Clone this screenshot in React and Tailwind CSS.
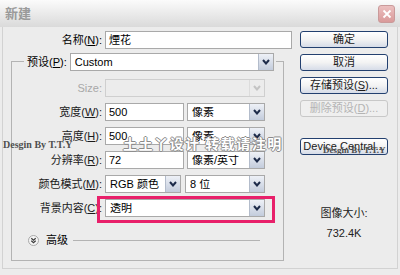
import React from 'react'

// 下拉框右侧的箭头按钮
const Arrow = ({ disabled }) => (
  <div
    className={`w-[15px] h-full flex items-center justify-center border-l ${
      disabled
        ? 'border-[#dcdcdc] bg-[#ececec]'
        : 'border-[#b3bccb] bg-linear-to-b from-[#eef1f7] to-[#c3ccdc]'
    }`}
  >
    <svg width="8" height="6" viewBox="0 0 8 6">
      <polyline
        points="1,1 4,4.5 7,1"
        fill="none"
        stroke={disabled ? '#c4c4c4' : '#1d2b4a'}
        strokeWidth="2"
      />
    </svg>
  </div>
)

const Select = ({ w, value, disabled }) => (
  <div
    className={`flex items-center h-[18px] border ${w} ${
      disabled ? 'border-[#cfcfcf] bg-[#ececec]' : 'border-[#a9a9a9] bg-white'
    }`}
  >
    <span className="flex-1 pl-[4px] whitespace-nowrap overflow-hidden">{value}</span>
    <Arrow disabled={disabled} />
  </div>
)

const Input = ({ w, value }) => (
  <div className={`flex items-center h-[18px] border border-[#a9a9a9] bg-white pl-[3px] ${w}`}>
    {value}
  </div>
)

const Label = ({ children, dim }) => (
  <div className={`w-[93px] pr-[3px] text-right whitespace-nowrap ${dim ? 'text-[#a8a8a8]' : 'text-[#1a1a1a]'}`}>
    {children}
  </div>
)

const Button = ({ children, disabled, className = '' }) => (
  <div
    className={`h-[17px] flex items-center justify-center rounded-[3px] border whitespace-nowrap ${
      disabled
        ? 'border-[#c8c8c8] text-[#b4b4b4] bg-[#efefef]'
        : 'border-[#23406f] text-[#1a1a1a] bg-linear-to-b from-white via-[#f3f3f3] to-[#d6dce8]'
    } ${className}`}
  >
    {children}
  </div>
)

const U = ({ children }) => <span className="underline">{children}</span>

const App = () => {
  return (
    <div className="relative w-[400px] h-[275px] overflow-hidden bg-[#ececec] text-[11px] leading-none font-['Liberation_Sans','Noto_Sans_CJK_SC',sans-serif]">
      {/* 标题栏 */}
      <div className="h-[27px] flex items-center justify-between pl-[5px] pr-[5px] bg-linear-to-b from-[#fbfbfb] to-[#dadada]">
        <span className="text-[13px] font-bold text-[#9a9a9a]">新建</span>
        <div className="w-[17px] h-[18px] rounded-[3px] border border-[#c99a9a] bg-linear-to-b from-[#ecc0c0] to-[#d99a9a] flex items-center justify-center">
          <svg width="10" height="10" viewBox="0 0 10 10">
            <path d="M1.5 1.5 L8.5 8.5 M8.5 1.5 L1.5 8.5" stroke="#fff" strokeWidth="1.8" />
          </svg>
        </div>
      </div>

      {/* 对话框主体 */}
      <div className="mx-[2px] h-[242px] border-l border-r border-b border-[#d2d2d2] bg-[#ececec] flex">
        {/* 左侧 */}
        <div className="w-[289px] pt-[4px] flex flex-col">
          <div className="flex items-center h-[18px]">
            <div className="w-[102px] pr-[3px] text-right">
              名称(<U>N</U>):
            </div>
            <Input w="w-[187px]" value="煙花" />
          </div>

          {/* 分组框 */}
          <div className="ml-[8px] mt-[12px] w-[273px] h-[200px] border border-[#b3b3b3] flex flex-col">
            <div className="-mt-[9px] ml-[12px] pl-[3px] pr-[2px] self-start bg-[#ececec] flex items-center h-[18px]">
              <span className="pr-[3px]">
                预设(<U>P</U>):
              </span>
              <Select w="w-[204px]" value="Custom" />
            </div>

            <div className="mt-[8px] flex items-center h-[18px]">
              <Label dim>Size:</Label>
              <Select w="w-[160px]" value="" disabled />
            </div>

            <div className="mt-[6px] flex items-center h-[18px]">
              <Label>
                宽度(<U>W</U>):
              </Label>
              <Input w="w-[79px]" value="500" />
              <div className="ml-[3px]">
                <Select w="w-[78px]" value="像素" />
              </div>
            </div>

            <div className="mt-[6px] flex items-center h-[18px]">
              <Label>
                高度(<U>H</U>):
              </Label>
              <Input w="w-[79px]" value="500" />
              <div className="ml-[3px]">
                <Select w="w-[78px]" value="像素" />
              </div>
            </div>

            <div className="mt-[6px] flex items-center h-[18px]">
              <Label>
                分辨率(<U>R</U>):
              </Label>
              <Input w="w-[79px]" value="72" />
              <div className="ml-[3px]">
                <Select w="w-[78px]" value="像素/英寸" />
              </div>
            </div>

            <div className="mt-[6px] flex items-center h-[18px]">
              <Label>
                颜色模式(<U>M</U>):
              </Label>
              <Select w="w-[76px]" value="RGB 颜色" />
              <div className="ml-[4px]">
                <Select w="w-[80px]" value="8 位" />
              </div>
            </div>

            <div className="mt-[6px] flex items-center h-[18px]">
              <Label>
                背景内容(<U>C</U>):
              </Label>
              <Select w="w-[160px]" value="透明" />
            </div>

            {/* 高级 */}
            <div className="mt-[17px] ml-[16px] flex items-center h-[12px]">
              <svg width="11" height="11" viewBox="0 0 11 11">
                <circle cx="5.5" cy="5.5" r="5" fill="#f4f4f4" stroke="#a8a8a8" />
                <polyline points="3.3,3.2 5.5,5.2 7.7,3.2" fill="none" stroke="#3b3b3b" strokeWidth="1.2" />
                <polyline points="3.3,5.8 5.5,7.8 7.7,5.8" fill="none" stroke="#3b3b3b" strokeWidth="1.2" />
              </svg>
              <span className="ml-[7px]">高级</span>
              <div className="ml-[5px] w-[187px] h-px bg-[#b3b3b3]" />
            </div>
          </div>
        </div>

        {/* 右侧按钮 */}
        <div className="ml-[8px] w-[88px] pt-[4px] flex flex-col">
          <Button>确定</Button>
          <Button className="mt-[6px]">取消</Button>
          <Button className="mt-[6px]">
            存储预设(<U>S</U>)...
          </Button>
          <Button className="mt-[6px]" disabled>
            删除预设(<U>D</U>)...
          </Button>
          <Button className="mt-[21px]">Device Central...</Button>
          <div className="mt-[53px] text-center text-[#222]">图像大小:</div>
          <div className="mt-[9px] text-center text-[#222]">732.4K</div>
        </div>
      </div>

      {/* 红色高亮框 */}
      <div className="absolute left-[97px] top-[196px] w-[178px] h-[27px] border-[3px] border-[#e8206a]" />

      {/* 水印 */}
      <div className="absolute left-[3px] top-[140px] text-[10px] font-bold text-[#4f4f4f] font-['Liberation_Serif',serif]">
        Desgin By T.T.Y
      </div>
      <div className="absolute left-[123px] top-[136px] text-[14px] font-bold tracking-[1.5px] text-white font-['Noto_Sans_CJK_SC',sans-serif] [text-shadow:1px_0_#8a8a8a,-1px_0_#8a8a8a,0_1px_#8a8a8a,0_-1px_#8a8a8a]">
        土土丫设计 转载请注明
      </div>
      <div className="absolute left-[323px] top-[146px] text-[9px] font-bold text-[#4f4f4f] font-['Liberation_Serif',serif]">
        Desgin By T.T.Y
      </div>
    </div>
  )
}

export default App
